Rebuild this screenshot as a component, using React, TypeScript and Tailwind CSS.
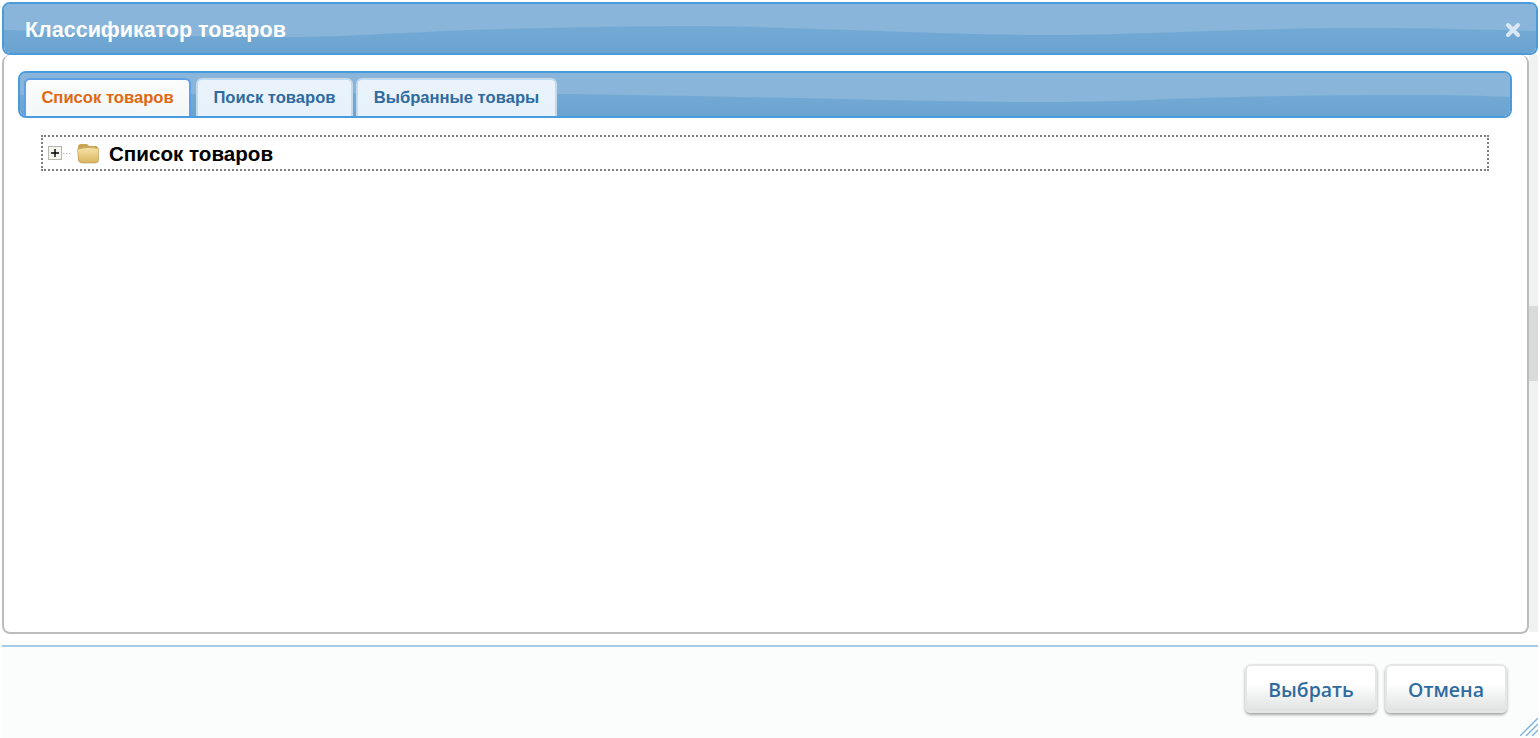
import React from 'react';

const headerWave = 'M0 26 C60 28 200 34 300 33 C380 31 420 27 500 25 C580 23 640 22 700 22 C800 23 950 31 1050 31 C1120 31 1250 24 1350 24 C1430 24 1490 26 1532 27 L1532 0 L0 0 Z';
const tabsWave = 'M0 22 C180 20 400 20 536 21 C640 22 700 24 780 25 C860 27 950 29 1030 29 C1100 29 1140 26 1180 25 C1250 23 1320 22 1380 22 C1430 22 1470 23 1490 24 L1490 0 L0 0 Z';

// Glossy blue band with the soft wave running through it
function Wave({ id, d, box }: { id: string; d: string; box: string }) {
  return (
    <svg className="absolute inset-0 w-full h-full" preserveAspectRatio="none" viewBox={box}>
      <defs>
        <linearGradient id={id} x1="0" y1="0" x2="0" y2="1">
          <stop offset="0.4" stopColor="#74abd5" />
          <stop offset="1" stopColor="#6ba3d0" />
        </linearGradient>
      </defs>
      <rect width="100%" height="100%" fill={`url(#${id})`} />
      <path d={d} fill="#88b5d9" />
    </svg>
  );
}

function Tab({ label, active }: { label: string; active?: boolean }) {
  if (active) {
    return (
      <div className="relative flex items-center justify-center h-[38px] w-[167px] rounded-t-[6px] border-2 border-b-0 border-[#5f9fe8] bg-gradient-to-b from-[#fbfcfc] to-[#f3f7f8] text-[16.6px] font-bold text-[#e0690f]">
        {label}
      </div>
    );
  }
  return (
    <div className="relative flex items-center justify-center h-[38px] rounded-t-[6px] border-2 border-b-0 border-[#c3d9ec] bg-gradient-to-b from-[#eaf3fb] to-[#e6f1fb] text-[16.6px] font-bold text-[#2f6b9f]">
      {label}
    </div>
  );
}

function FooterButton({ label, width }: { label: string; width: string }) {
  return (
    <button className={`${width} h-[49px] pt-[2px] rounded-[6px] border-2 border-[#e4e6e6] bg-gradient-to-b from-white from-40% to-[#e0e2e2] text-[19.5px] font-semibold text-[#2f6b9f] shadow-[0_2px_3px_rgba(0,0,0,0.35)] [font-family:'Open_Sans',sans-serif]`}>
      {label}
    </button>
  );
}

export default function App() {
  return (
    <div className="w-[1540px] h-[738px] overflow-hidden bg-white flex flex-col pl-[2px] pr-[2px] pt-[2px] font-['Liberation_Sans',sans-serif]">
      {/* Dialog title */}
      <div className="relative h-[53px] shrink-0 rounded-[8px] border-2 border-[#4a9bdc] overflow-hidden flex items-center justify-between pl-[21px] pr-[15px] pt-[3px]">
        <Wave id="header-gloss" d={headerWave} box="0 0 1532 49" />
        <span className="relative text-[21.5px] font-bold text-white">Классификатор товаров</span>
        <svg className="relative" width="16" height="16" viewBox="0 0 16 16">
          <path d="M3 3 L13 13 M13 3 L3 13" stroke="#dbe7f3" strokeWidth="4" strokeLinecap="round" />
        </svg>
      </div>

      <div className="flex h-[579px] shrink-0">
        {/* Main panel */}
        <div className="w-[1527px] h-full rounded-[8px] border-2 border-t-0 border-[#bdbdbd] bg-white pl-[14px] pr-[15px] pt-[16px]">
          <div className="relative h-[47px] rounded-[8px] border-2 border-[#4a9bdc] overflow-hidden flex items-end pl-[4px]">
            <Wave id="tabs-gloss" d={tabsWave} box="0 0 1490 43" />
            <Tab label="Список товаров" active />
            <div className="ml-[5px] w-[157px]"><Tab label="Поиск товаров" /></div>
            <div className="ml-[3px] w-[201px]"><Tab label="Выбранные товары" /></div>
          </div>

          {/* Tree */}
          <div className="ml-[23px] mt-[17px] w-[1448px] h-[36px] border-2 border-dotted border-[#808080] flex items-center pl-[5px]">
            <svg width="24" height="15" viewBox="0 0 24 15" className="shrink-0">
              <rect x="0.5" y="0.5" width="13" height="13" fill="#f4f4ee" stroke="#b5b9ad" />
              <path d="M3 7 H11 M7 3 V11" stroke="#000" strokeWidth="1.4" />
              <path d="M15 7.5 H24" stroke="#b9bdb5" strokeDasharray="1.5 1.5" />
            </svg>
            <svg width="24" height="22" viewBox="0 0 24 22" className="ml-[4px] shrink-0">
              <defs>
                <linearGradient id="folder-front" x1="0" y1="0" x2="0" y2="1">
                  <stop offset="0" stopColor="#f6e4a8" />
                  <stop offset="1" stopColor="#d9b45f" />
                </linearGradient>
              </defs>
              <path d="M2 5 Q2 2 5 2 H10 Q12 2 13 4 H20 Q22 4 22 7 V17 Q22 20 19 20 H5 Q2 20 2 17 Z" fill="#c9a453" />
              <path d="M1.5 7 Q12 4 22.5 6.5 V18 Q22.5 21 19 21 H6 Q3 21 2.5 18 Z" fill="url(#folder-front)" stroke="#b8954e" strokeWidth="0.6" />
            </svg>
            <span className="ml-[9px] pt-[2px] text-[20.6px] font-bold text-black">Список товаров</span>
          </div>
        </div>

        {/* Scrollbar */}
        <div className="w-[9px] h-[577px] bg-[#f0f1f1] pt-[251px]">
          <div className="h-[75px] bg-[#d9dbdb]" />
        </div>
      </div>

      {/* Footer */}
      <div className="relative mt-[11px] flex-1 border-t-2 border-[#a5cbe6] bg-[#fbfdfd] flex justify-end items-start gap-[8px] pt-[17px] pr-[31px]">
        <FooterButton label="Выбрать" width="w-[132px]" />
        <FooterButton label="Отмена" width="w-[122px]" />
        <svg className="absolute right-0 bottom-[2px]" width="18" height="18" viewBox="0 0 18 18">
          <path d="M0 18 L18 0 M6 18 L18 6 M12 18 L18 12" stroke="#7fb2e0" strokeWidth="1.4" />
        </svg>
      </div>
    </div>
  );
}
